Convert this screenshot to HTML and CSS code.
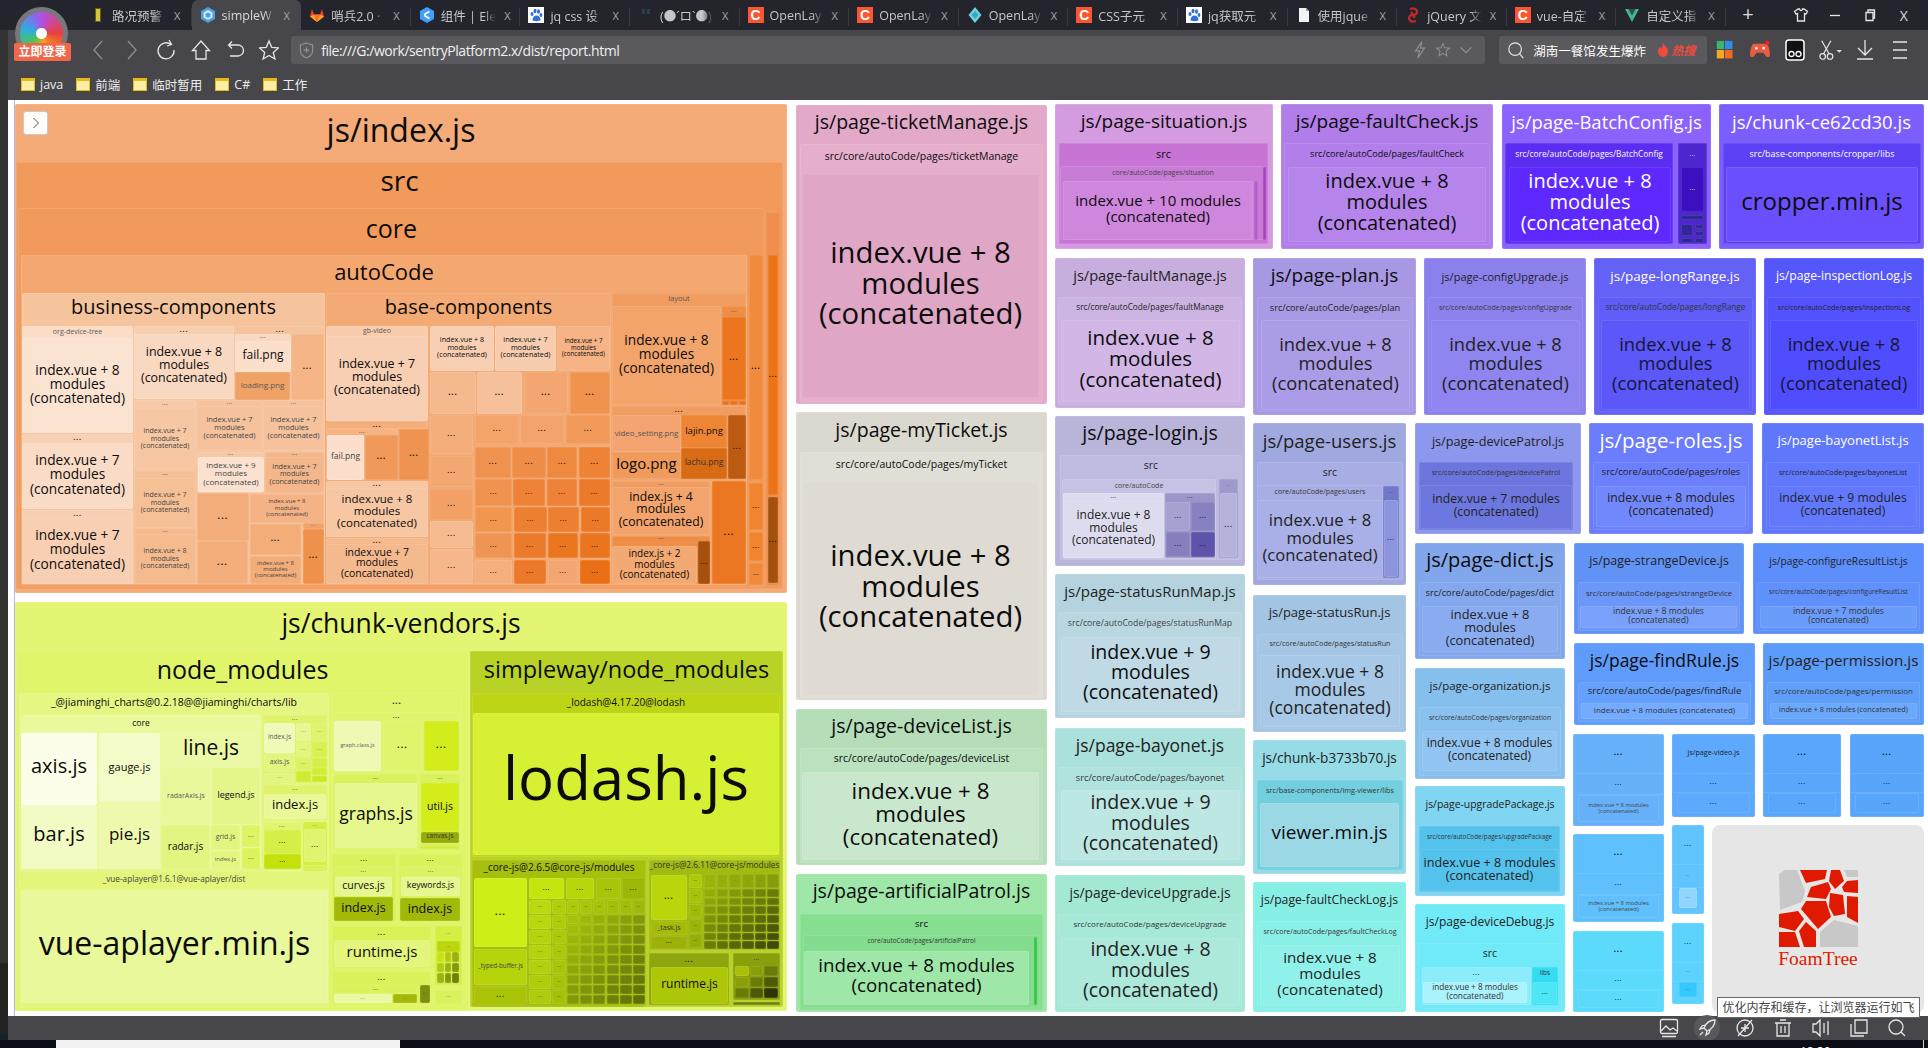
FILE: index.html
```html
<!DOCTYPE html>
<html lang="zh">
<head>
<meta charset="utf-8">
<title>report</title>
<link rel="stylesheet" href="styles.css">
</head>
<body>
<div class="desktop">
  <div class="main">
    <div class="edge"></div>
    <div class="browser">
      <div class="tabs">
        <div class="tab"><span class="fav fav-batt"></span><span class="tab-title">路况预警</span><span class="tab-x">X</span></div>
        <div class="tab active"><span class="fav"><svg viewBox="0 0 16 16"><path d="M8 0l7 4v8l-7 4-7-4V4z" fill="#4b9fe0"/><path d="M8 3l4.5 2.5v5L8 13l-4.5-2.5v-5z" fill="#cfe6f8"/><path d="M8 5.5l2.4 1.3v2.6L8 10.8 5.6 9.4V6.8z" fill="#4b9fe0"/></svg></span><span class="tab-title">simpleW</span><span class="tab-x">X</span></div>
        <div class="tab"><span class="fav"><svg viewBox="0 0 16 16"><path d="M8 15L1 9.5 3 2l2 5.5h6L13 2l2 7.5z" fill="#e2492d"/><path d="M8 15L5 7.5h6z" fill="#fc6d26"/><path d="M1 9.5L5 7.5 8 15zM15 9.5L11 7.5 8 15z" fill="#fca326"/></svg></span><span class="tab-title">哨兵2.0 ·</span><span class="tab-x">X</span></div>
        <div class="tab"><span class="fav"><svg viewBox="0 0 16 16"><path d="M8 0l7 4v8l-7 4-7-4V4z" fill="#409eff"/><path d="M10.5 4.5L6 7v2l4.500 2.500" fill="none" stroke="#fff" stroke-width="1.800"/></svg></span><span class="tab-title">组件 | Ele</span><span class="tab-x">X</span></div>
        <div class="tab"><span class="fav fav-paw"><svg viewBox="0 0 16 16"><rect width="16" height="16" fill="#fff"/><g fill="#2f6fe0"><ellipse cx="4" cy="7" rx="1.500" ry="2"/><ellipse cx="7" cy="4" rx="1.500" ry="2.200"/><ellipse cx="10.500" cy="4.500" rx="1.500" ry="2.200"/><ellipse cx="13" cy="8" rx="1.400" ry="2"/><path d="M4.500 13c0-3 2-4.500 4-4.500s4 1.500 4 4.500c0 1.500-8 1.500-8 0z"/></g></svg></span><span class="tab-title">jq css 设</span><span class="tab-x">X</span></div>
        <div class="tab"><span class="fav"><svg viewBox="0 0 16 16"><rect x="4" y="2" width="3" height="5" fill="#24424a"/><rect x="9" y="2" width="3" height="5" fill="#24424a"/><rect x="5" y="9" width="6" height="3" fill="#1b2a30"/></svg></span><span class="tab-title">(●´ロ`●)</span><span class="tab-x">X</span></div>
        <div class="tab"><span class="fav fav-c">C</span><span class="tab-title">OpenLay</span><span class="tab-x">X</span></div>
        <div class="tab"><span class="fav fav-c">C</span><span class="tab-title">OpenLay</span><span class="tab-x">X</span></div>
        <div class="tab"><span class="fav"><svg viewBox="0 0 16 16"><path d="M8 0l6.500 8L8 16 1.500 8z" fill="#6fd0e0"/><path d="M8 4l3.500 4L8 12 4.500 8z" fill="#3ea7c0"/></svg></span><span class="tab-title">OpenLay</span><span class="tab-x">X</span></div>
        <div class="tab"><span class="fav fav-c">C</span><span class="tab-title">CSS子元</span><span class="tab-x">X</span></div>
        <div class="tab"><span class="fav fav-paw"><svg viewBox="0 0 16 16"><rect width="16" height="16" fill="#fff"/><g fill="#2f6fe0"><ellipse cx="4" cy="7" rx="1.500" ry="2"/><ellipse cx="7" cy="4" rx="1.500" ry="2.200"/><ellipse cx="10.500" cy="4.500" rx="1.500" ry="2.200"/><ellipse cx="13" cy="8" rx="1.400" ry="2"/><path d="M4.500 13c0-3 2-4.500 4-4.500s4 1.500 4 4.500c0 1.500-8 1.500-8 0z"/></g></svg></span><span class="tab-title">jq获取元</span><span class="tab-x">X</span></div>
        <div class="tab"><span class="fav"><svg viewBox="0 0 16 16"><path d="M3 1h7l3 3v11H3z" fill="#f2f2f2"/><path d="M10 1v3h3z" fill="#999"/></svg></span><span class="tab-title">使用jque</span><span class="tab-x">X</span></div>
        <div class="tab"><span class="fav"><svg viewBox="0 0 16 16"><path d="M5 2c5-2 9 2 6 5-2 2-5 0-4-2M11 14c-5 2-9-2-6-5 2-2 5 0 4 2" fill="none" stroke="#c2282c" stroke-width="2.200"/></svg></span><span class="tab-title">jQuery 文</span><span class="tab-x">X</span></div>
        <div class="tab"><span class="fav fav-c">C</span><span class="tab-title">vue-自定</span><span class="tab-x">X</span></div>
        <div class="tab"><span class="fav"><svg viewBox="0 0 16 16"><path d="M1 2h14L8 15z" fill="#41b883"/><path d="M4.500 2h7L8 8.500z" fill="#35495e"/></svg></span><span class="tab-title">自定义指</span><span class="tab-x">X</span></div>
        <div class="tab-plus">+</div>
        <div class="win-ctrl">
          <span class="win-btn"><svg viewBox="0 0 16 16"><path d="M5 2L1.500 4.500 3 7l1.500-.5V14h7V6.500L13 7l1.500-2.500L11 2H9.500a1.500 1.500 0 0 1-3 0z" class="ln"/></svg></span>
          <span class="win-btn"><svg viewBox="0 0 16 16"><path d="M3 8.500h10" class="ln"/></svg></span>
          <span class="win-btn"><svg viewBox="0 0 16 16"><path d="M4 5.500h7v8H4zM6 5.500V3h6.500v8H11" class="ln"/></svg></span>
          <span class="win-btn win-x">X</span>
        </div>
      </div>
      <div class="toolbar">
        <span class="nav-btn"><svg viewBox="0 0 20 24"><path d="M14 3L6 12l8 9" class="ln dim"/></svg></span>
        <span class="nav-btn"><svg viewBox="0 0 20 24"><path d="M6 3l8 9-8 9" class="ln dim"/></svg></span>
        <span class="nav-btn"><svg viewBox="0 0 20 24"><path d="M15 6.500A8 8 0 1 0 18 12M13 2l2.500 4.500L11 8" class="ln"/></svg></span>
        <span class="nav-btn"><svg viewBox="0 0 20 24"><path d="M10 3L1.500 12.500H5V21h10v-8.500h3.500z" class="ln"/></svg></span>
        <span class="nav-btn"><svg viewBox="0 0 20 24"><path d="M4 7h9a5.500 5.500 0 0 1 0 11H5M7 3.500L3.500 7 7 10.500" class="ln"/></svg></span>
        <span class="nav-btn"><svg viewBox="0 0 20 24"><path d="M10 3l2.700 6.300 6.800.6-5.200 4.500 1.600 6.600-5.900-3.500L4.100 21l1.600-6.600L.5 9.900l6.800-.6z" class="ln"/></svg></span>
        <div class="address">
          <svg class="shield" viewBox="0 0 16 18"><path d="M8 1l6.500 2v6c0 4-3 6.500-6.500 8-3.500-1.500-6.500-4-6.500-8V3zM8 5.500v6M5 8.500h6" class="ln dim"/></svg>
          <span class="url">file:///G:/work/sentryPlatform2.x/dist/report.html</span>
          <span class="addr-right">
            <svg viewBox="0 0 16 20"><path d="M10 1L3 11h4.500L5.500 19 13 8H8.500z" class="ln dim"/></svg>
            <svg viewBox="0 0 20 20"><path d="M10 2l2.300 5.300 5.700.5-4.300 3.800 1.300 5.600-5-3-5 3 1.300-5.600L2 7.800l5.700-.5z" class="ln dim"/></svg>
            <svg viewBox="0 0 16 20"><path d="M2 7l6 6 6-6" class="ln dim"/></svg>
          </span>
        </div>
        <div class="search">
          <svg class="search-ico" viewBox="0 0 20 20"><circle cx="9" cy="9" r="7" class="ln"/><path d="M14 14l4 5" class="ln"/></svg>
          <span class="search-text">湖南一餐馆发生爆炸</span>
          <svg class="flame" viewBox="0 0 14 18"><path d="M7 0c1 4 6 6 6 11a6 6 0 0 1-12 0c0-3 2-4 2-6 1 1 2 2 2 3 1-2 2-5 2-8z" fill="#f04a3c"/></svg>
          <span class="hot">热搜</span>
        </div>
        <span class="tool"><svg viewBox="0 0 18 20" class="ico-win"><rect x="0" y="0" width="8" height="9" fill="#3cb371"/><rect x="9" y="0" width="8" height="9" fill="#2f8fe8"/><rect x="0" y="10" width="8" height="9" fill="#f5a623"/><rect x="9" y="10" width="8" height="9" fill="#f26b1d"/></svg></span>
        <span class="tool"><svg viewBox="0 0 22 20"><path d="M4 3h14c2 0 4 8 4 12 0 3-3 4-5 1l-2-3H7l-2 3c-2 3-5 2-5-1 0-4 2-12 4-12z" fill="#ef5a3c"/><circle cx="7" cy="8" r="1.500" fill="#fff"/><circle cx="15" cy="8" r="1.500" fill="#fff"/><circle cx="19" cy="2" r="2.500" fill="#f01e1e"/></svg></span>
        <span class="tool"><svg viewBox="0 0 20 22"><rect x="1" y="1" width="18" height="20" rx="3" fill="#111" stroke="#fff" stroke-width="1.500"/><circle cx="6.500" cy="15" r="2.500" fill="none" stroke="#fff" stroke-width="1.300"/><circle cx="13.500" cy="15" r="2.500" fill="none" stroke="#fff" stroke-width="1.300"/></svg></span>
        <span class="tool tool-wide"><svg viewBox="0 0 26 22"><circle cx="5" cy="18" r="3" class="ln"/><circle cx="13" cy="18" r="3" class="ln"/><path d="M6 15L14 1M12 15L4 1" class="ln"/><path d="M20 11h6l-3 3z" fill="#ddd"/></svg></span>
        <span class="tool"><svg viewBox="0 0 20 22"><path d="M10 1v15M3 9l7 7 7-7M2 20h16" class="ln"/></svg></span>
        <span class="tool"><svg viewBox="0 0 20 22"><path d="M3 3h14M3 11h14M3 19h14" class="ln"/></svg></span>
      </div>
      <div class="bookmarks">
        <span class="bm"><i class="folder"></i>java</span>
        <span class="bm"><i class="folder"></i>前端</span>
        <span class="bm"><i class="folder"></i>临时暂用</span>
        <span class="bm"><i class="folder"></i>C#</span>
        <span class="bm"><i class="folder"></i>工作</span>
      </div>
      <div class="page">
        <div class="treemap" id="treemap"></div>
      </div>
      <div class="statusbar">
        <span class="st"><svg viewBox="0 0 20 20"><rect x="1.500" y="1.500" width="17" height="14" rx="1.500" class="ln"/><path d="M2 13l5-5 4 4 3-2 4 3M3 18.500h14" class="ln"/></svg></span>
        <span class="st st-on"><svg viewBox="0 0 20 20"><path d="M18 2c-5 0-9 3-11 8l3 3c5-2 8-6 8-11zM7 10l-4 1 2-3 3-1M10 13l-1 4 3-2 1-3M6 14l-3 3" class="ln"/></svg></span>
        <span class="st"><svg viewBox="0 0 20 20"><circle cx="10" cy="10" r="8" class="ln"/><path d="M10 6v8M6 10h8M3 18L17 2" class="ln"/></svg></span>
        <span class="st"><svg viewBox="0 0 20 20"><path d="M4 5v13h12V5M2 5h16M7 2h6M8 8v7M12 8v7" class="ln"/></svg></span>
        <span class="st"><svg viewBox="0 0 20 20"><path d="M9 2v16L5 14H2V6h3zM13 5v10M17 3v14" class="ln"/></svg></span>
        <span class="st"><svg viewBox="0 0 20 20"><path d="M6 2h12v13H6zM2 6v12h13" class="ln"/></svg></span>
        <span class="st"><svg viewBox="0 0 20 20"><circle cx="9" cy="9" r="7" class="ln"/><path d="M14 14l4 4" class="ln"/></svg></span>
        <div class="tooltip">优化内存和缓存，让浏览器运行如飞</div>
      </div>
    </div>
  </div>
  <div class="taskbar">
    <span class="task-white"></span>
    <span class="task-time">18:30</span>
    <span class="task-line"></span>
  </div>
  <div class="logo"><span class="logo-disc"></span><span class="login-btn">立即登录</span></div>
</div>
<script src="app.js"></script>
</body>
</html>
```
FILE: styles.css
```css
html, body { margin: 0; padding: 0; height: 100%; overflow: hidden; }
body { font-family: "Open Sans", "Noto Sans CJK SC", sans-serif; background: #000; color: #111; }
.desktop { position: relative; display: flex; flex-direction: column; width: 1928px; height: 1048px; overflow: hidden; }
.main { display: flex; flex: 1; min-height: 0; }
.edge { flex: 0 0 8px; background: linear-gradient(#24252c 0 30px, #333 30px 963px, #222 963px 1034px, #1a2028 1034px); }
.browser { flex: 1; display: flex; flex-direction: column; min-width: 0; }

.ln { fill: none; stroke: #e6e6e6; stroke-width: 1.300; }
.ln.dim { stroke: #8f8f93; }

.tabs { flex: 0 0 30px; display: flex; align-items: stretch; background: #24252c; padding-left: 74px; }
.tab { flex: 0 0 109.600px; box-sizing: border-box; display: flex; align-items: center; padding-left: 8px; position: relative; color: #c6c6c8; font-size: 12.500px; }
.tab::after { content: ""; position: absolute; right: 0; top: 8px; bottom: 4px; width: 1px; background: #3a3b42; }
.tab.active { background: #47474b; border-radius: 6px 6px 0 0; color: #d8d8da; }
.tab.active::after { display: none; }
.fav { flex: 0 0 16px; height: 16px; margin-right: 6px; display: block; }
.fav svg { display: block; width: 16px; height: 16px; }
.fav-c { background: #fc5531; color: #fff; font: 700 14px/16px "Liberation Sans", sans-serif; text-align: center; }
.fav-batt { width: 6px; flex-basis: 6px; height: 14px; margin: 0 11px 0 5px; background: #d8c43a; border: 1px solid #6a5f12; box-sizing: border-box; }
.tab-title { flex: 0 0 54px; white-space: nowrap; -webkit-mask-image: linear-gradient(90deg, #000 78%, transparent); mask-image: linear-gradient(90deg, #000 78%, transparent); }
.tab-x { margin-left: 8px; color: #a9a9ad; font-size: 11px; }
.tab-plus { margin-left: 12px; width: 20px; text-align: center; color: #ddd; font-size: 20px; line-height: 28px; }
.win-ctrl { margin-left: auto; display: flex; padding-right: 7px; align-items: center; }
.win-btn { width: 34.300px; text-align: center; color: #ddd; font-size: 14px; }
.win-btn svg { width: 16px; height: 16px; display: block; margin: 0 auto; }

.toolbar { flex: 0 0 35px; display: flex; align-items: center; background: #47474b; padding: 6px 0 1px 73px; box-sizing: border-box; }
.nav-btn { flex: 0 0 34.200px; display: flex; justify-content: center; }
.nav-btn svg { width: 20px; height: 24px; }
.address { flex: 0 0 1194px; margin-left: 5px; height: 28px; background: #5a5a5e; border-radius: 3px; display: flex; align-items: center; box-sizing: border-box; padding-left: 8px; }
.shield { width: 15px; height: 17px; margin-right: 7px; }
.url { color: #f0f0f0; font-size: 14px; letter-spacing: -.45px; white-space: nowrap; }
.addr-right { margin-left: auto; display: flex; gap: 7px; align-items: center; padding-right: 11px; }
.addr-right svg { width: 16px; height: 18px; }
.search { flex: 0 0 208px; margin-left: 14px; height: 28px; background: #5a5a5e; border-radius: 3px; display: flex; align-items: center; box-sizing: border-box; padding-left: 8px; }
.search-ico { width: 18px; height: 18px; margin-right: 8px; }
.search-text { color: #fff; font-size: 12.500px; letter-spacing: .05px; white-space: nowrap; width: 118px; }
.flame { width: 12px; height: 16px; margin-left: 6px; }
.hot { color: #f04a3c; font-weight: 700; font-style: italic; font-size: 12px; margin-left: 2px; white-space: nowrap; }
.tool { flex: 0 0 35px; display: flex; justify-content: center; }
.tool svg { width: 20px; height: 22px; }
.tool-wide svg { width: 24px; }
.ico-win { transform: scale(.85); }

.bookmarks { flex: 0 0 35px; box-sizing: border-box; display: flex; align-items: center; gap: 13px; background: #47474b; padding: 3px 0 0 13px; color: #eee; font-size: 12.500px; }
.bm { display: flex; align-items: center; white-space: nowrap; }
.folder { display: block; width: 14px; height: 13px; margin-right: 5px; background: #fdeea6; border: 1px solid #e8b71c; border-top-width: 3px; box-sizing: border-box; }

.page { flex: 1; background: #fff; display: flex; min-height: 0; padding-left: 6px; }
.treemap { position: relative; flex: 1; border-left: 1px solid #b4b4e6; overflow: hidden; }
.node { position: absolute; border-radius: 2px; box-shadow: inset 0 0 0 1px rgba(255, 255, 255, .1); }
.lab { display: flex; align-items: center; justify-content: center; box-sizing: border-box; width: 100%; height: 100%; padding-bottom: .22em; text-align: center; white-space: pre; line-height: 1.040; color: #0c0c0c; }
.dots { font-weight: 700; letter-spacing: .12em; }
.expand { position: absolute; left: 8px; top: 11px; width: 25px; height: 24px; box-sizing: border-box; background: #fffdfa; border: 1px solid #c9c9c9; border-radius: 3px; display: flex; align-items: center; justify-content: center; }
.expand svg { width: 8px; height: 12px; }
.expand path { fill: none; stroke: #555; stroke-width: 1; }
.foamtree { position: absolute; left: 1697px; top: 725px; width: 212px; height: 188px; background: #e6e6e6; border-radius: 8px; display: flex; flex-direction: column; align-items: center; justify-content: center; }
.foamtree svg { width: 79px; height: 78px; display: block; }
.foamtree span { font: 19.500px/20px "Liberation Serif", serif; color: #e01a00; margin-top: 2px; }

.statusbar { flex: 0 0 24px; position: relative; background: #47474b; display: flex; justify-content: flex-end; align-items: center; padding-right: 21px; gap: 18px; }
.st { width: 20px; height: 20px; display: block; position: relative; }
.st svg { width: 20px; height: 20px; display: block; }
.st-on::before { content: ""; position: absolute; left: -3px; top: -3px; width: 26px; height: 26px; border-radius: 50%; background: #58585c; }
.st-on svg { position: relative; }
.tooltip { position: absolute; right: 8px; bottom: 22px; width: 203px; height: 21px; box-sizing: border-box; background: #fff; border: 1px solid #666; color: #444; font-size: 12px; line-height: 19px; text-align: center; white-space: nowrap; overflow: hidden; }

.taskbar { flex: 0 0 8px; position: relative; display: flex; background: #0b0e15; overflow: hidden; }
.task-white { margin-left: 56px; width: 344px; background: #f2f2f2; }
.task-time { margin-left: 1400px; color: #fff; font-size: 12px; line-height: 12px; padding-top: 6px; }
.task-line { margin-left: auto; margin-right: 4px; width: 1px; background: #ccc; }

.logo { position: absolute; left: 14px; top: 7px; width: 57px; height: 54px; }
.logo-disc { position: absolute; left: 1px; top: 0; width: 53px; height: 53px; box-sizing: border-box; border: 5px solid #77777c; border-radius: 50%; background: radial-gradient(circle at 50% 50%, #fff 0 5px, transparent 6px), conic-gradient(#b04fe8, #e8413c 25%, #f7a11a 45%, #43c75b 65%, #31a9e5 80%, #b04fe8); }
.login-btn { position: absolute; left: 0; top: 36px; width: 57px; height: 18px; background: #f0674a; border-radius: 2px; color: #fff; font-size: 12px; font-weight: 700; line-height: 18px; text-align: center; white-space: nowrap; }
```
FILE: app.js
```js
(function () {
  var root = document.getElementById('treemap');
  var OX = 15, OY = 100;
  var G = '#5a5a5a', W = '#ffffff';

  function n(x, y, x2, y2, c, t, fs, h, tc) {
    var d = document.createElement('div');
    d.className = 'node';
    d.style.left = (x - OX) + 'px';
    d.style.top = (y - OY) + 'px';
    d.style.width = (x2 - x) + 'px';
    d.style.height = (y2 - y) + 'px';
    d.style.background = c;
    if (t) {
      var l = document.createElement('div');
      l.className = 'lab' + (t === '...' ? ' dots' : '');
      l.textContent = t;
      l.style.fontSize = fs + 'px';
      if (h) l.style.height = (h - y) + 'px';
      if (tc) l.style.color = tc;
      d.appendChild(l);
    }
    root.appendChild(d);
  }
  function hex(c) { return [parseInt(c.substr(1, 2), 16), parseInt(c.substr(3, 2), 16), parseInt(c.substr(5, 2), 16)]; }
  function mix(a, b, t) {
    var A = hex(a), B = hex(b);
    return 'rgb(' + [0, 1, 2].map(function (i) { return Math.round(A[i] + (B[i] - A[i]) * t); }).join(',') + ')';
  }
  function tiles(x, y, x2, y2, cols, rows, c1, c2, dots) {
    var w = (x2 - x) / cols, h = (y2 - y) / rows;
    for (var j = 0; j < rows; j++) for (var i = 0; i < cols; i++) {
      n(x + i * w, y + j * h, x + (i + 1) * w - 1, y + (j + 1) * h - 1,
        mix(c1, c2, (i / Math.max(cols - 1, 1) + j / Math.max(rows - 1, 1)) / 2), dots ? '...' : '', dots || 0);
    }
  }
  function v3(k) { return 'index.vue + ' + k + '\nmodules\n(concatenated)'; }
  function v2(k) { return 'index.vue + ' + k + ' modules\n(concatenated)'; }
  function v1(k) { return 'index.vue + ' + k + ' modules (concatenated)'; }
  var D = '...';
  var P = 'src/core/autoCode/pages/';

  /* js/index.js */
  n(15, 104, 787, 593, '#f4ab77', 'js/index.js', 32, 162);
  n(16, 162, 783, 589, '#f29a5b', 'src', 28, 206);
  n(18, 208, 765, 587, '#f29a5b', 'core', 25, 253);
  n(21, 255, 747, 585, '#f4a870', 'autoCode', 22, 293);
  n(22, 293, 325, 584, '#f6c49c', 'business-components', 20, 326);
  n(22, 326, 133, 433, '#fbdcc6', 'org-device-tree', 7, 338, G);
  n(22, 338, 133, 433, '#fbe3d2', v3(8), 13.7);
  n(22, 434, 133, 509, '#f8d1b3', D, 7, 443);
  n(22, 443, 133, 509, '#fadbc5', v3(7), 13.7);
  n(22, 510, 133, 584, '#f8cfb2', D, 7, 518);
  n(22, 518, 133, 584, '#f8cfb2', v3(7), 13.7);
  n(134, 326, 234, 399, '#f8cfb0', D, 7, 334);
  n(134, 334, 234, 399, '#f9d8c1', v3(8), 12.4);
  n(235, 326, 325, 400, '#f6c49c', D, 7, 334);
  n(235, 334, 291, 372, '#f9d8c0', D, 5, 341, G);
  n(235, 341, 291, 372, '#fbdfcb', 'fail.png', 12);
  n(235, 372, 290, 400, '#f0a165', 'loading.png', 8, 0, G);
  n(291, 334, 324, 400, '#f5b587', D, 8);
  n(134, 400, 196, 470, '#f7c9a7', D, 5, 408, G);
  n(134, 408, 196, 470, '#f7c6a2', v3(7), 7, 0, '#444');
  n(134, 471, 196, 528, '#f6c096', D, 5, 478, G);
  n(134, 478, 196, 528, '#f6c096', v3(7), 7, 0, '#444');
  n(134, 528, 196, 584, '#f5bb8e', D, 5, 534, G);
  n(134, 534, 196, 584, '#f5bb8e', v3(8), 7, 0, '#444');
  n(197, 400, 262, 451, '#f6c29d', D, 5, 406, G);
  n(197, 406, 262, 451, '#f6c29d', v3(7), 7.5, 0, '#444');
  n(263, 400, 324, 451, '#f6c29d', D, 5, 406, G);
  n(263, 406, 324, 451, '#f6c29d', v3(7), 7.5, 0, '#444');
  n(197, 452, 264, 493, '#f7c8a5', D, 5, 457, G);
  n(198, 457, 264, 492, '#fbe2d0', v3(9), 8, 0, '#444');
  n(265, 452, 324, 493, '#f4b78c', D, 5, 457, G);
  n(265, 457, 324, 493, '#f4b78c', v3(7), 7.2, 0, '#444');
  n(197, 493, 249, 541, '#f3ad7b', D, 9, 0);
  n(197, 541, 248, 584, '#f3ae7c', D, 9, 0);
  n(250, 494, 324, 523, '#f4b285', v3(8), 6, 0, '#444');
  n(250, 524, 301, 555, '#f3ad78', D, 8);
  n(250, 556, 301, 584, '#f3ad78', v3(8), 6, 0, '#444');
  n(303, 523, 324, 529, '#f2a368', D, 4, 0, G);
  n(303, 529, 324, 584, '#ef914b', D, 8);

  n(326, 293, 611, 584, '#f4aa74', 'base-components', 20, 326);
  n(326, 326, 428, 421, '#f8ccac', 'gb-video', 7, 336, G);
  n(326, 336, 428, 421, '#f8cfb2', v3(7), 12.4);
  n(326, 421, 428, 429, '#f4ae7c', D, 7);
  n(326, 429, 398, 480, '#f5b283', D, 5, 435, G);
  n(327, 435, 364, 480, '#fbdfcc', 'fail.png', 8.5, 0, '#444');
  n(365, 435, 398, 480, '#f0995a', D, 8);
  n(399, 429, 429, 480, '#ef9350', D, 8);
  n(326, 481, 428, 537, '#f7c6a2', D, 7, 488);
  n(326, 488, 428, 537, '#f7c6a2', v3(8), 11.5);
  n(326, 538, 428, 584, '#f5b98e', D, 7, 544);
  n(326, 544, 428, 584, '#f5b98e', v3(7), 10.4);
  var rows = [
    [430, 326, 494, 371, '#f8cfb2', v3(8), 7.2], [495, 326, 556, 371, '#f8cdaf', v3(7), 7.2], [557, 326, 610, 371, '#f5b386', v3(7), 6.2],
    [430, 372, 476, 414, '#f5b98e', D, 8], [477, 372, 522, 414, '#f6c19a', D, 8], [524, 372, 568, 414, '#f3a66f', D, 8], [570, 372, 610, 414, '#f0934f', D, 8],
    [430, 415, 473, 454, '#f4ae7c', D, 7], [430, 456, 473, 487, '#f3a871', D, 7], [430, 489, 473, 520, '#f2a066', D, 7], [430, 521, 473, 548, '#f5ba90', D, 7], [430, 549, 473, 584, '#f5b78b', D, 7],
    [475, 415, 519, 444, '#f3a46b', D, 7], [520, 415, 564, 444, '#f3a46c', D, 7], [566, 415, 610, 444, '#f19a5a', D, 7],
    [475, 447, 511, 478, '#f0924f', D, 7], [512, 447, 546, 478, '#ef8e48', D, 7], [547, 447, 577, 478, '#ef8940', D, 7], [579, 447, 610, 478, '#ee8235', D, 7],
    [475, 479, 512, 506, '#ef934f', D, 6], [513, 479, 545, 506, '#ee8337', D, 6], [547, 479, 577, 506, '#ed8238', D, 6], [579, 479, 610, 506, '#ec7a2b', D, 6],
    [475, 507, 512, 532, '#f0964f', D, 6], [514, 507, 547, 532, '#ed7f30', D, 6], [548, 507, 579, 532, '#ed7f30', D, 6], [581, 507, 610, 532, '#ec7928', D, 6],
    [475, 533, 512, 558, '#ef9553', D, 6], [514, 533, 546, 558, '#ec7a2b', D, 6], [548, 533, 578, 558, '#eb7620', D, 6], [580, 533, 610, 558, '#eb741f', D, 6],
    [475, 560, 512, 584, '#f4af7d', D, 6], [514, 560, 546, 584, '#ec782a', D, 6], [548, 560, 578, 584, '#f3a671', D, 6], [580, 560, 610, 584, '#ea6f16', D, 6]
  ];
  rows.forEach(function (r) { n.apply(null, r); });
  n(612, 293, 746, 405, '#f19d61', 'layout', 7.5, 306, G);
  n(612, 306, 721, 405, '#f3a46b', v3(8), 13.7);
  n(722, 306, 746, 405, '#ef8d46', D, 5, 317, G);
  n(722, 317, 746, 400, '#ec761f', D, 8);
  n(722, 401, 729, 405, '#e8701a'); n(730, 401, 738, 405, '#e8701a'); n(739, 401, 746, 405, '#e8701a');
  n(612, 406, 746, 480, '#f19d61', D, 7, 415);
  n(612, 415, 681, 452, '#f3a471', 'video_setting.png', 7.8, 0, '#555');
  n(612, 452, 681, 479, '#f09a5c', 'logo.png', 15);
  n(681, 415, 727, 448, '#ee8535', 'lajin.png', 9.5);
  n(681, 448, 727, 479, '#d96b15', 'lachu.png', 8.5, 0, '#333');
  n(728, 415, 746, 479, '#bd5a12', D, 7);
  n(612, 481, 710, 535, '#f19d61', D, 5, 487, G);
  n(612, 487, 710, 535, '#f2a46c', 'index.js + 4\nmodules\n(concatenated)', 12.2);
  n(712, 481, 746, 584, '#ec7722', D, 9);
  n(612, 536, 710, 584, '#ef8e47', D, 5, 541, '#444');
  n(612, 546, 697, 584, '#f3a972', 'index.js + 2\nmodules\n(concatenated)', 10);
  n(698, 541, 710, 584, '#a6500e', D, 6);
  n(749, 255, 763, 480, '#ef8a3e', D, 8);
  n(749, 483, 763, 530, '#f0842f', D, 6);
  n(749, 532, 763, 561, '#f0842f', D, 6);
  n(749, 563, 763, 585, '#f08a3a', D, 5);
  n(766, 212, 780, 586, '#ef8e4d');
  n(768, 255, 778, 495, '#ec7317', D, 7);
  n(768, 497, 778, 583, '#a3500f', D, 7);

  /* js/chunk-vendors.js */
  n(15, 602, 787, 1011, '#e3f573', 'js/chunk-vendors.js', 26.5, 651);
  n(16, 651, 469, 1011, '#e0f56a', 'node_modules', 25, 693);
  n(19, 693, 329, 871, '#e5f683', '_@jiaminghi_charts@0.2.18@@jiaminghi/charts/lib', 10.5, 715);
  n(21, 715, 261, 869, '#eaf99b', 'core', 8.5, 733);
  n(21, 733, 97, 805, '#fdfee9', 'axis.js', 20);
  n(99, 733, 160, 802, '#f3fbc8', 'gauge.js', 11);
  n(161, 733, 261, 767, '#ecf9a4', 'line.js', 21);
  n(21, 805, 97, 869, '#f3fbc4', 'bar.js', 20);
  n(99, 803, 160, 869, '#eef9ad', 'pie.js', 17);
  n(161, 768, 211, 824, '#e9f89b', 'radarAxis.js', 7, 0, G);
  n(212, 768, 260, 824, '#e5f68a', 'legend.js', 9);
  n(161, 825, 210, 869, '#e3f581', 'radar.js', 10);
  n(211, 825, 240, 850, '#e2f57e', 'grid.js', 7, 0, G);
  n(211, 851, 240, 869, '#e4f680', 'index.js', 6, 0, G);
  n(242, 825, 260, 847, '#def463', D, 5, 0, G);
  n(242, 848, 260, 869, '#dcf35b', D, 5, 0, G);
  n(263, 715, 327, 783, '#dff26a', D, 5, 723, G);
  n(264, 723, 295, 753, '#f0fab8', 'index.js', 6.5, 0, G);
  n(264, 753, 295, 772, '#e2f57e', 'axis.js', 7, 0, G);
  n(264, 773, 295, 782, '#e2f57e', D, 4, 0, G);
  n(296, 723, 311, 741, '#e8f791', D, 4, 0, G); n(312, 723, 327, 741, '#dff46c', D, 4, 0, G);
  n(296, 742, 311, 757, '#e2f57c', D, 4, 0, G); n(312, 742, 327, 757, '#d8f050', D, 4, 0, G);
  n(296, 758, 311, 770, '#dbf361', D, 4, 0, G); n(312, 758, 327, 768, '#d6ef48');
  n(312, 768, 327, 775, '#d0ec33'); n(312, 776, 327, 782, '#caea1d'); n(296, 771, 311, 782, '#d0ec32');
  n(263, 785, 327, 820, '#dff26a', D, 5, 794, G);
  n(264, 794, 326, 819, '#eaf89a', 'index.js', 13);
  n(263, 822, 301, 870, '#e0f46e', D, 5, 830, G);
  n(264, 830, 301, 854, '#d6ef46', D, 6);
  n(264, 854, 301, 869, '#c4e10b', D, 5);
  n(303, 822, 327, 871, '#d5ee3f', D, 4, 829, G);
  n(304, 829, 326, 862, '#e0f46f', D, 6);
  n(304, 865, 326, 870, '#dbf255');
  n(19, 871, 329, 1008, '#e3f57a', '_vue-aplayer@1.6.1@vue-aplayer/dist', 8.2, 890, '#444');
  n(21, 890, 328, 1003, '#e9f89a', 'vue-aplayer.min.js', 32);
  n(332, 693, 462, 852, '#e0f46c', D, 8, 712);
  n(333, 712, 460, 772, '#e0f46d', D, 6, 721);
  n(334, 721, 381, 771, '#eff9b4', 'graph.class.js', 5.5, 0, G);
  n(383, 721, 422, 771, '#e0f46d', D, 9);
  n(424, 721, 459, 771, '#d2ed1b', D, 9);
  n(334, 774, 417, 848, '#d9f15a', D, 5, 783, G);
  n(335, 783, 417, 848, '#e6f78d', 'graphs.js', 17.5);
  n(420, 774, 460, 850, '#d9f15a', D, 5, 783, G);
  n(421, 783, 459, 832, '#d2ed1a', 'util.js', 10.5);
  n(421, 832, 459, 843, '#96ab0a', 'canvas.js', 6.5, 0, '#333');
  n(420, 846, 459, 849, '#d3ec35');
  n(332, 854, 396, 921, '#d9f15a', D, 6, 866);
  n(334, 866, 393, 877, '#dbf262', D, 5, 0, G);
  n(335, 877, 392, 896, '#e7f78f', 'curves.js', 10.5);
  n(334, 897, 393, 921, '#a3b90a', 'index.js', 12.5);
  n(399, 854, 462, 921, '#d9f15a', D, 6, 866);
  n(401, 866, 460, 877, '#dbf262', D, 5, 0, G);
  n(401, 877, 460, 896, '#e7f78f', 'keywords.js', 8.7);
  n(400, 898, 460, 921, '#a3b90a', 'index.js', 12.5);
  n(332, 926, 431, 968, '#daf258', D, 7, 940);
  n(334, 940, 430, 967, '#e3f57a', 'runtime.js', 15);
  n(332, 971, 431, 1004, '#dbf25c', D, 7, 985);
  n(334, 985, 417, 994, '#dbf25c', D, 5, 0, G);
  n(334, 994, 392, 1003, '#ecf9a4', D, 4, 0, G);
  n(393, 994, 417, 1003, '#a3b90a', D, 4, 0, G);
  n(420, 985, 430, 1003, '#808e0d', D, 4, 0, G);
  n(435, 926, 462, 985, '#d4ee42', D, 4, 941, G);
  n(437, 941, 460, 952, '#bcd60c', D, 3, 0, G);
  tiles(437, 952, 460, 984, 3, 3, '#c7e214', '#6e7f0a');
  n(435, 990, 462, 1004, '#d9f15a', D, 4, 0, G);

  n(470, 651, 783, 1007, '#b9d226', 'simpleway/node_modules', 23.5, 692);
  n(472, 693, 780, 857, '#bdd514', '_lodash@4.17.20@lodash', 10, 713);
  n(473, 713, 779, 855, '#d8f034', 'lodash.js', 60);
  n(472, 860, 646, 1007, '#a8bf0e', '_core-js@2.6.5@core-js/modules', 10, 877);
  n(474, 878, 527, 947, '#cdee16', D, 9);
  n(474, 949, 527, 985, '#b6d30b', '_typed-buffer.js', 6.2, 0, '#444');
  n(474, 986, 527, 1005, '#aac307', D, 7);
  n(529, 878, 564, 899, '#c5e50f', D, 6);
  n(566, 878, 594, 899, '#b9d60a', D, 6);
  n(596, 878, 621, 899, '#aac40a', D, 6);
  n(622, 878, 645, 899, '#9eb707', D, 6);
  tiles(529, 900, 552, 1005, 1, 7, '#bcd80f', '#a3bc08', 4);
  tiles(552, 900, 567, 1005, 1, 7, '#b2cd0a', '#9ab108', 3);
  tiles(567, 900, 646, 915, 6, 1, '#aec80a', '#92a808', 3);
  tiles(567, 915, 646, 1005, 6, 9, '#a8c009', '#5f7006');
  n(649, 860, 780, 950, '#a3ba10', '_core-js@2.6.11@core-js/modules', 8.3, 873, '#333');
  n(651, 875, 687, 920, '#bad50c', D, 8);
  n(651, 921, 687, 935, '#a4bb08', '_task.js', 7, 0, '#333');
  n(651, 936, 687, 949, '#9cb208', D, 5);
  tiles(689, 874, 703, 949, 1, 5, '#aec80a', '#7f9207', 3);
  tiles(704, 874, 780, 889, 6, 1, '#9db309', '#73860a', 2);
  tiles(704, 889, 780, 950, 6, 7, '#96ab08', '#3f4a03');
  n(649, 953, 729, 1005, '#8fa50d', D, 7, 967);
  n(651, 967, 728, 1004, '#adc608', 'runtime.js', 12);
  n(733, 953, 780, 1000, '#89a00c', D, 5, 965, '#333');
  tiles(735, 966, 779, 999, 3, 3, '#a8c009', '#2e3602');
  n(733, 1002, 780, 1005, '#6f820a');

  /* page tiles */
  n(796, 105, 1047, 404, '#e2a9c8', 'js/page-ticketManage.js', 19.5, 144);
  n(800, 144, 1043, 402, '#e5aecb', P + 'ticketManage', 10.5, 172);
  n(802, 174, 1039, 398, '#e0a6c6', v3(8), 29.3);
  n(796, 412, 1047, 700, '#dbd8cf', 'js/page-myTicket.js', 19.5, 452);
  n(800, 452, 1043, 698, '#e1ded6', P + 'myTicket', 10.5, 480);
  n(802, 482, 1039, 696, '#dfdbd3', v3(8), 29.3);
  n(796, 709, 1047, 865, '#b5deb8', 'js/page-deviceList.js', 19.5, 748);
  n(800, 748, 1043, 863, '#bbe2be', P + 'deviceList', 10.5, 771);
  n(802, 772, 1039, 860, '#c9e7cc', v3(8), 22.4);
  n(796, 874, 1047, 1012, '#9fe7a9', 'js/page-artificialPatrol.js', 19.5, 913);
  n(800, 914, 1043, 1010, '#86de90', 'src', 9.5, 935);
  n(803, 935, 1040, 1008, '#84dd8e', 'core/autoCode/pages/artificialPatrol', 6.4, 950, '#333');
  n(804, 951, 1029, 1005, '#9fe7a9', v2(8), 18.8);
  n(1034, 937, 1037, 1005, '#2fc63f');

  n(1055, 104, 1273, 249, '#d59be0', 'js/page-situation.js', 19, 143);
  n(1059, 143, 1268, 244, '#c874d6', 'src', 11, 166);
  n(1060, 166, 1266, 240, '#c87cd6', 'core/autoCode/pages/situation', 7, 181, '#444');
  n(1063, 181, 1253, 240, '#cf86dd', 'index.vue + 10 modules\n(concatenated)', 15);
  n(1254, 181, 1258, 240, '#b65ccd');
  n(1263, 167, 1266, 240, '#a83dc0');
  n(1281, 104, 1493, 249, '#b07de9', 'js/page-faultCheck.js', 19, 143);
  n(1284, 143, 1490, 245, '#b17eea', P + 'faultCheck', 9, 167);
  n(1288, 167, 1486, 242, '#b685ec', v3(8), 20);
  n(1502, 104, 1711, 249, '#8b62fb', 'js/page-BatchConfig.js', 18.5, 143, W);
  n(1505, 143, 1673, 244, '#5a2df0', P + 'BatchConfig', 8.3, 167, W);
  n(1509, 167, 1671, 242, '#5e29ff', v3(8), 20, 0, W);
  n(1678, 143, 1707, 244, '#4e26d0', D, 5, 167, '#ccc');
  n(1681, 167, 1704, 212, '#3c0fc0', D, 5, 0, '#ddd');
  n(1681, 215, 1704, 220, '#33259a');
  n(1681, 224, 1693, 236, '#33259a'); n(1695, 224, 1704, 229, '#33259a'); n(1695, 231, 1704, 236, '#33259a'); n(1681, 238, 1693, 243, '#33259a'); n(1695, 238, 1704, 243, '#33259a');
  n(1719, 104, 1924, 249, '#7b5efc', 'js/chunk-ce62cd30.js', 18.5, 143, W);
  n(1723, 143, 1921, 244, '#5b40f4', 'src/base-components/cropper/libs', 9, 167, W);
  n(1726, 167, 1918, 242, '#6a4fff', 'cropper.min.js', 24);

  n(1055, 258, 1245, 408, '#c7aede', 'js/page-faultManage.js', 14.6, 297, '#222');
  n(1058, 297, 1242, 405, '#ccb3e2', P + 'faultManage', 8.2, 320, '#222');
  n(1061, 320, 1240, 402, '#d1b6e6', v3(8), 20.5);
  n(1253, 258, 1416, 415, '#a898e4', 'js/page-plan.js', 19, 297);
  n(1257, 297, 1413, 412, '#a99ae6', P + 'plan', 9.2, 320, '#222');
  n(1261, 320, 1410, 410, '#ac9ce8', v3(8), 18.3, 0, '#222');
  n(1424, 258, 1586, 415, '#8b81ec', 'js/page-configUpgrade.js', 11, 297, '#222');
  n(1428, 297, 1583, 412, '#8c82ee', P + 'configUpgrade', 7, 320, '#333');
  n(1431, 320, 1580, 410, '#8e85f0', v3(8), 18.3, 0, '#222');
  n(1594, 258, 1756, 415, '#6461f6', 'js/page-longRange.js', 13.5, 297, W);
  n(1598, 297, 1753, 412, '#5f5cf7', P + 'longRange', 8.2, 320, '#333');
  n(1601, 320, 1750, 410, '#5b57f9', v3(8), 18.3, 0, '#161632');
  n(1764, 258, 1924, 415, '#5656fd', 'js/page-inspectionLog.js', 12.2, 297, W);
  n(1767, 297, 1921, 412, '#5352fe', P + 'inspectionLog', 7.1, 320, '#222');
  n(1770, 320, 1918, 410, '#4f4dff', v3(8), 18.3, 0, '#161632');

  n(1055, 416, 1245, 566, '#b9b4da', 'js/page-login.js', 19.5, 455);
  n(1060, 455, 1242, 560, '#bfbbe0', 'src', 10.5, 478, '#222');
  n(1062, 479, 1216, 559, '#c5c2e4', 'core/autoCode', 7, 493, '#444');
  n(1063, 493, 1164, 558, '#dddcef', D, 5, 501, '#333');
  n(1063, 501, 1164, 558, '#dddcef', v3(8), 12, 0, '#222');
  n(1165, 493, 1215, 558, '#9a96ca', D, 5, 501, '#333');
  n(1166, 502, 1190, 531, '#a5a1d1', D, 6); n(1191, 502, 1215, 531, '#8682c0', D, 6);
  n(1166, 532, 1190, 557, '#8480be', D, 6); n(1191, 532, 1215, 557, '#5b54a8', D, 6);
  n(1219, 479, 1238, 558, '#9e9bcc', D, 4, 493, '#555');
  n(1220, 493, 1237, 557, '#b5b2db', D, 7);
  n(1055, 574, 1245, 718, '#b4d3de', 'js/page-statusRunMap.js', 15, 612, '#222');
  n(1058, 612, 1242, 715, '#b9d6e1', P + 'statusRunMap', 8.7, 637, '#444');
  n(1061, 637, 1240, 712, '#bfdae4', v3(9), 19.5);
  n(1055, 728, 1245, 866, '#abe1dc', 'js/page-bayonet.js', 17.5, 767, '#222');
  n(1058, 767, 1242, 863, '#b0e3de', P + 'bayonet', 9.3, 790, '#333');
  n(1061, 790, 1240, 860, '#bce7e3', v3(9), 19.5, 0, '#222');
  n(1055, 875, 1245, 1012, '#a3e8d5', 'js/page-deviceUpgrade.js', 13.8, 914, '#222');
  n(1058, 914, 1242, 1009, '#a6e9d8', P + 'deviceUpgrade', 8, 937, '#333');
  n(1061, 938, 1240, 1006, '#ade9db', v3(8), 19.5, 0, '#222');
  n(1253, 423, 1406, 585, '#a0a8e0', 'js/page-users.js', 18.5, 462, '#222');
  n(1257, 462, 1403, 580, '#a8aee3', 'src', 10.5, 485, '#222');
  n(1257, 485, 1383, 578, '#a8aee3', 'core/autoCode/pages/users', 7, 500, '#333');
  n(1257, 500, 1383, 578, '#a9afe7', v3(8), 16.6, 0, '#222');
  n(1383, 486, 1399, 578, '#7178c9', D, 4, 500, '#333');
  n(1384, 500, 1398, 577, '#8d94dd', D, 6);
  n(1253, 595, 1406, 732, '#a3c5e3', 'js/page-statusRun.js', 13, 634, '#222');
  n(1257, 634, 1403, 729, '#a5c7e5', P + 'statusRun', 7.2, 655, '#333');
  n(1260, 655, 1400, 727, '#a7c9e7', v3(8), 17.5, 0, '#222');
  n(1415, 423, 1581, 534, '#8d97ed', 'js/page-devicePatrol.js', 12.7, 462, '#222');
  n(1419, 462, 1573, 530, '#6b75dd', P + 'devicePatrol', 7.2, 485, '#333');
  n(1420, 485, 1572, 529, '#6d77e0', v2(7), 12.2, 0, '#222');
  n(1589, 423, 1753, 534, '#6b7cfd', 'js/page-roles.js', 20.5, 462, W);
  n(1593, 462, 1749, 530, '#6c7ffc', P + 'roles', 9.6, 485, '#222');
  n(1596, 486, 1746, 527, '#7188fc', v2(8), 12.2, 0, '#222');
  n(1762, 423, 1924, 534, '#5f77fb', 'js/page-bayonetList.js', 13, 462, W);
  n(1766, 462, 1920, 530, '#6078fc', P + 'bayonetList', 7.3, 485, '#222');
  n(1769, 486, 1917, 527, '#6278fd', v2(9), 12.2, 0, '#222');
  n(1415, 543, 1565, 659, '#82a6eb', 'js/page-dict.js', 20, 582);
  n(1419, 582, 1561, 656, '#84a8ed', P + 'dict', 9.3, 605, '#222');
  n(1422, 606, 1558, 652, '#88acef', v3(8), 12.8, 0, '#222');
  n(1574, 543, 1744, 634, '#6193f7', 'js/page-strangeDevice.js', 12.4, 582, '#222');
  n(1578, 582, 1740, 631, '#6a97f8', P + 'strangeDevice', 7.8, 605, '#333');
  n(1580, 606, 1737, 628, '#79a1fb', v2(8), 8.7, 0, '#333');
  n(1753, 543, 1924, 634, '#5c8efc', 'js/page-configureResultList.js', 10.2, 582, '#222');
  n(1757, 582, 1920, 631, '#6090fb', P + 'configureResultList', 6.6, 605, '#333');
  n(1760, 606, 1917, 628, '#6a9cfb', v2(7), 8.7, 0, '#333');
  n(1574, 643, 1755, 725, '#5f9bfb', 'js/page-findRule.js', 17.5, 682);
  n(1578, 682, 1751, 722, '#64a0fc', P + 'findRule', 9.6, 703, '#222');
  n(1581, 703, 1748, 719, '#72abff', v1(8), 8, 0, '#333');
  n(1763, 643, 1924, 725, '#5b9bf9', 'js/page-permission.js', 15.2, 682, '#222');
  n(1767, 682, 1920, 722, '#5f9ffa', P + 'permission', 8, 703, '#333');
  n(1770, 703, 1917, 719, '#6aa8fc', v1(8), 7.3, 0, '#333');
  n(1415, 668, 1565, 779, '#85bfee', 'js/page-organization.js', 11.5, 707, '#222');
  n(1419, 707, 1561, 776, '#8ac1ef', P + 'organization', 6.8, 730, '#333');
  n(1422, 731, 1557, 771, '#92c4f2', v2(8), 12, 0, '#222');
  n(1415, 786, 1565, 896, '#7fd5f2', 'js/page-upgradePackage.js', 10.4, 825, '#222');
  n(1419, 826, 1560, 892, '#53c2ec', P + 'upgradePackage', 6.3, 849, '#333');
  n(1420, 849, 1559, 891, '#53c2ec', v2(8), 12.6, 0, '#222');
  n(1415, 904, 1565, 1012, '#70e9f9', 'js/page-deviceDebug.js', 12, 943, '#222');
  n(1418, 943, 1562, 1009, '#70e9f9', 'src', 10.5, 966, '#222');
  n(1422, 967, 1531, 1005, '#8bedfb', D, 6, 981, '#222');
  n(1423, 982, 1527, 1003, '#aaf2fc', v2(8), 8.2, 0, '#333');
  n(1532, 967, 1558, 1005, '#34dcf1', 'libs', 6.5, 981, '#333');
  n(1533, 982, 1557, 1004, '#4ce6f6', D, 5);
  n(1253, 740, 1406, 874, '#96dce6', 'js/chunk-b3733b70.js', 13.6, 780, '#222');
  n(1257, 780, 1403, 870, '#71cfe0', 'src/base-components/img-viewer/libs', 7.3, 803, '#333');
  n(1260, 803, 1399, 867, '#9ad8e6', 'viewer.min.js', 19);
  n(1253, 882, 1406, 1012, '#88efe6', 'js/page-faultCheckLog.js', 12.2, 921, '#222');
  n(1257, 921, 1403, 1009, '#8af0e7', P + 'faultCheckLog', 7.1, 944, '#333');
  n(1260, 945, 1400, 1006, '#8ff1e9', v3(8), 15.2, 0, '#222');

  function mini(x, y, x2, y2, c, a, b, t, by) {
    n(x, y, x2, y2, c, a, a === D ? 8 : 7.2, y + 39, a === D ? 0 : '#222');
    n(x, y + 39, x2, by, c, D, 6, 0);
    if (t) n(x + 5, by, x2 - 5, y2 - 4, c, t, 5.8, 0, '#444'); else n(x + 5, by, x2 - 5, y2 - 4, c, D, 6, 0);
  }
  mini(1573, 734, 1664, 826, '#67b1fb', D, D, v2(8), 795);
  mini(1672, 734, 1755, 817, '#5ca9fd', 'js/page-video.js', D, '', 793);
  mini(1763, 734, 1841, 817, '#59a7fc', D, D, '', 793);
  mini(1850, 734, 1924, 817, '#58a6fb', D, D, '', 793);
  mini(1573, 834, 1664, 922, '#5fc0fd', D, D, v2(8), 895);
  mini(1573, 931, 1664, 1012, '#5cdafc', D, D, '', 990);
  n(1672, 825, 1704, 914, '#60c5fe', D, 6, 864);
  n(1672, 864, 1704, 888, '#60c5fe', D, 4, 0, '#555');
  n(1679, 888, 1697, 908, '#90d6ff', D, 4, 0, '#555');
  n(1672, 923, 1704, 1004, '#5cd2fe', D, 6, 962);
  n(1672, 962, 1704, 982, '#5cd2fe', D, 4, 0, '#555');
  n(1679, 982, 1697, 997, '#34c8ff', D, 4, 0, '#444');

  /* overlays */
  var btn = document.createElement('div');
  btn.className = 'expand';
  btn.innerHTML = '<svg viewBox="0 0 8 12"><path d="M1.500 1l5 5-5 5"/></svg>';
  root.appendChild(btn);
  var ft = document.createElement('div');
  ft.className = 'foamtree';
  ft.innerHTML = '<svg viewBox="0 0 79 78">' +
    '<g fill="#c8c8c8"><path d="M6 1h12l8 21-3 11L1 41 0 5z"/><path d="M65 1h14v7H68z"/><path d="M41 63l14-12 24 6v21H41z"/></g>' +
    '<g fill="#e01a00"><path d="M21 1h27l-2 9-19 4z"/><path d="M52 1h9l4 11-9 8-6-8z"/><path d="M32 18l17-5 3 7-5 10-19-2z"/><path d="M68 12l11-1v13l-14-1-2-5z"/><path d="M51 24l13 2 2 19-11 2-5-9z"/><path d="M68 27l11 1v26l-11-6z"/><path d="M27 32h20l5 16-13 12-17-20z"/><path d="M0 45l19-3 6 8-9 12-16-4z"/><path d="M0 63h16l5 15H0z"/><path d="M20 62l7-9 10 9v16H25z"/></g></svg>' +
    '<span>FoamTree</span>';
  root.appendChild(ft);
})();
```
